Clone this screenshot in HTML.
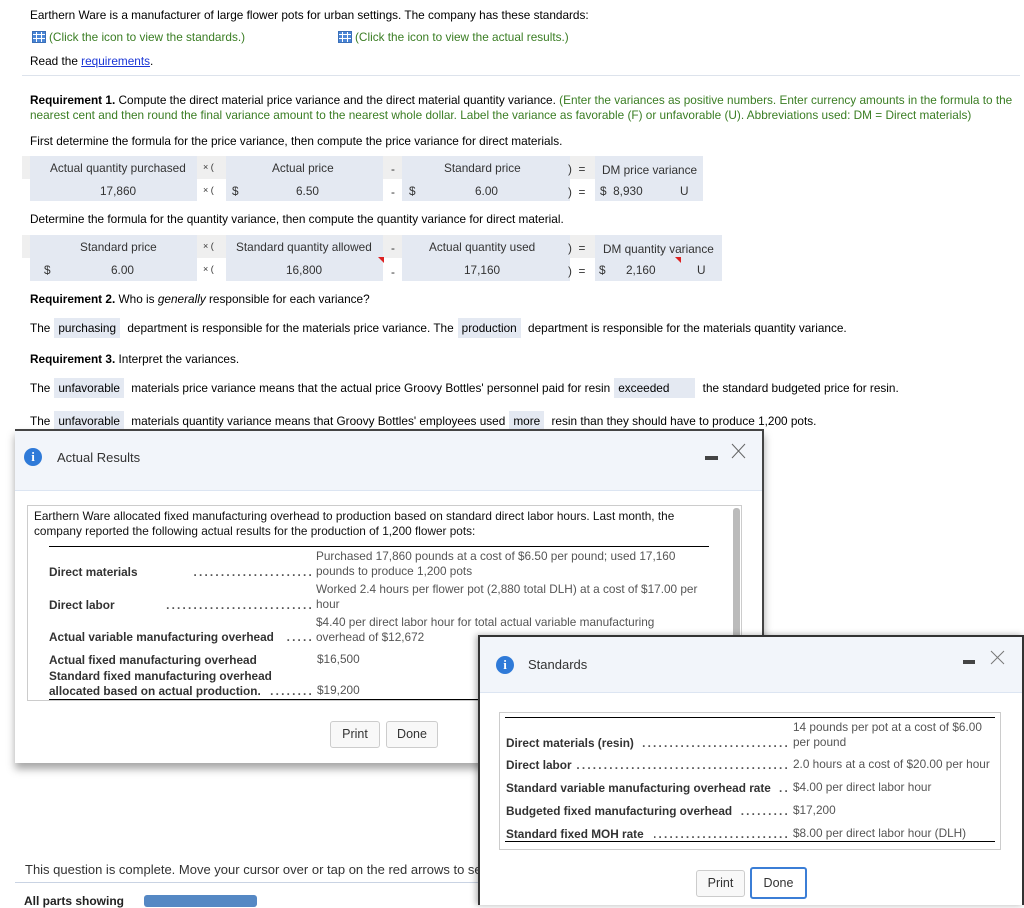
<!DOCTYPE html>
<html><head><meta charset="utf-8"><style>
*{margin:0;padding:0;box-sizing:border-box}
body{width:1024px;height:905px;overflow:hidden;background:#fff;font-family:"Liberation Sans",Arial,sans-serif;font-size:11.8px;color:#000;position:relative}
.a{position:absolute;white-space:nowrap}
.g{color:#3a7d23}
.c{position:absolute;background:#e4e9f2}
.gr{position:absolute;background:#efefef}
.t{position:absolute;white-space:nowrap;font-size:11.8px;color:#333}
.box{background:#e4e9f2;padding:3px 4px;margin:0 4px}
.ic{display:inline-block;width:14px;height:12px;background:#4b86d6;vertical-align:-2px;margin-right:3px;border:1px solid #3a6fb8;background-image:linear-gradient(90deg,transparent 3px,#fff 3px,#fff 4px,transparent 4px,transparent 8px,#fff 8px,#fff 9px,transparent 9px),linear-gradient(0deg,transparent 3px,#fff 3px,#fff 4px,transparent 4px,transparent 7px,#fff 7px,#fff 8px,transparent 8px)}
.info{position:absolute;width:18px;height:18px;border-radius:50%;background:#2f7ad8;color:#fff;font:bold 13px "Liberation Serif",serif;text-align:center;line-height:18px}
.btn{position:absolute;border:1px solid #ccc;border-radius:3px;background:#f8f8f8;font-size:12.5px;color:#333;text-align:center}
.dl{color:#555}
.b{font-weight:bold;color:#333}
.dots{position:absolute;overflow:hidden;white-space:nowrap;text-align:right;direction:rtl;color:#555;letter-spacing:2.2px;font-weight:bold}
.tri{position:absolute;width:0;height:0;border-top:6px solid #d22;border-left:6px solid transparent}
</style></head><body>
<div class="a" style="left:30px;top:8px">Earthern Ware is a manufacturer of large flower pots for urban settings. The company has these standards:</div>
<div class="a g" style="left:32px;top:30px"><span class="ic"></span>(Click the icon to view the standards.)</div>
<div class="a g" style="left:338px;top:30px"><span class="ic"></span>(Click the icon to view the actual results.)</div>
<div class="a" style="left:30px;top:54px">Read the <span style="color:#1a35d6;text-decoration:underline">requirements</span>.</div>
<div class="a" style="left:22px;top:75px;width:998px;height:1px;background:#dde3ec"></div>
<div class="a" style="left:30px;top:93px;line-height:15px"><b>Requirement 1.</b> Compute the direct material price variance and the direct material quantity variance. <span class="g">(Enter the variances as positive numbers. Enter currency amounts in the formula to the</span><br><span class="g">nearest cent and then round the final variance amount to the nearest whole dollar. Label the variance as favorable (F) or unfavorable (U). Abbreviations used: DM = Direct materials)</span></div>
<div class="a" style="left:30px;top:134px">First determine the formula for the price variance, then compute the price variance for direct materials.</div>

<div class="gr" style="left:22px;top:156px;width:681px;height:23px"></div>
<div class="c" style="left:30px;top:156px;width:167px;height:45px"></div>
<div class="c" style="left:226px;top:156px;width:157px;height:45px"></div>
<div class="c" style="left:402px;top:156px;width:168px;height:45px"></div>
<div class="c" style="left:595px;top:156px;width:108px;height:45px"></div>
<div class="t" style="left:50px;top:161px">Actual quantity purchased</div>
<div class="t" style="left:203px;top:162px;font-size:9px">× (</div>
<div class="t" style="left:272px;top:161px">Actual price</div>
<div class="t" style="left:391px;top:162px">-</div>
<div class="t" style="left:444px;top:161px">Standard price</div>
<div class="t" style="left:568px;top:162px">)&nbsp;&nbsp;=</div>
<div class="t" style="left:602px;top:163px">DM price variance</div>
<div class="t" style="left:100px;top:184px">17,860</div>
<div class="t" style="left:203px;top:185px;font-size:9px">× (</div>
<div class="t" style="left:232px;top:184px">$</div>
<div class="t" style="left:296px;top:184px">6.50</div>
<div class="t" style="left:391px;top:185px">-</div>
<div class="t" style="left:409px;top:184px">$</div>
<div class="t" style="left:475px;top:184px">6.00</div>
<div class="t" style="left:568px;top:185px">)&nbsp;&nbsp;=</div>
<div class="t" style="left:600px;top:184px">$&nbsp;&nbsp;8,930</div>
<div class="t" style="left:680px;top:184px">U</div>

<div class="a" style="left:30px;top:212px">Determine the formula for the quantity variance, then compute the quantity variance for direct material.</div>
<div class="gr" style="left:22px;top:235px;width:700px;height:23px"></div>
<div class="c" style="left:30px;top:235px;width:167px;height:46px"></div>
<div class="c" style="left:226px;top:235px;width:157px;height:46px"></div>
<div class="c" style="left:402px;top:235px;width:168px;height:46px"></div>
<div class="c" style="left:595px;top:235px;width:127px;height:46px"></div>
<div class="t" style="left:80px;top:240px">Standard price</div>
<div class="t" style="left:203px;top:241px;font-size:9px">× (</div>
<div class="t" style="left:236px;top:240px">Standard quantity allowed</div>
<div class="t" style="left:391px;top:241px">-</div>
<div class="t" style="left:429px;top:240px">Actual quantity used</div>
<div class="t" style="left:568px;top:241px">)&nbsp;&nbsp;=</div>
<div class="t" style="left:603px;top:242px">DM quantity variance</div>
<div class="t" style="left:44px;top:263px">$</div>
<div class="t" style="left:111px;top:263px">6.00</div>
<div class="t" style="left:203px;top:264px;font-size:9px">× (</div>
<div class="t" style="left:286px;top:263px">16,800</div>
<div class="tri" style="left:378px;top:257px"></div>
<div class="t" style="left:391px;top:265px">-</div>
<div class="t" style="left:464px;top:263px">17,160</div>
<div class="t" style="left:568px;top:264px">)&nbsp;&nbsp;=</div>
<div class="t" style="left:599px;top:263px">$</div>
<div class="t" style="left:626px;top:263px">2,160</div>
<div class="tri" style="left:675px;top:257px"></div>
<div class="t" style="left:697px;top:263px">U</div>

<div class="a" style="left:30px;top:292px"><b>Requirement 2.</b> Who is <i>generally</i> responsible for each variance?</div>
<div class="a" style="left:30px;top:320px;line-height:17px">The<span class="box">purchasing</span>&nbsp;department is responsible for the materials price variance. The<span class="box">production</span>&nbsp;department is responsible for the materials quantity variance.</div>
<div class="a" style="left:30px;top:352px"><b>Requirement 3.</b> Interpret the variances.</div>
<div class="a" style="left:30px;top:380px;line-height:17px">The<span class="box">unfavorable</span>&nbsp;materials price variance means that the actual price Groovy Bottles' personnel paid for resin<span class="box" style="padding-right:26px">exceeded</span>&nbsp;the standard budgeted price for resin.</div>
<div class="a" style="left:30px;top:413px;line-height:17px">The<span class="box">unfavorable</span>&nbsp;materials quantity variance means that Groovy Bottles' employees used<span class="box">more</span>&nbsp;resin than they should have to produce 1,200 pots.</div>

<div class="a" style="left:15px;top:429px;width:749px;height:334px;background:#fff;border-top:2px solid #444;border-right:2px solid #444;box-shadow:0 6px 8px rgba(0,0,0,.35)"></div>
<div class="a" style="left:15px;top:431px;width:747px;height:60px;background:#f2f5fa;border-bottom:1px solid #dce5f2"></div>
<div class="info" style="left:24px;top:448px">i</div>
<div class="a" style="left:57px;top:450px;font-size:13px;color:#333">Actual Results</div>
<div class="a" style="left:705px;top:456px;width:13px;height:4px;background:#444"></div>
<svg class="a" style="left:731px;top:443px" width="15" height="16"><path d="M1 1L14 15M14 1L1 15" stroke="#666" stroke-width="1"/></svg>
<div class="a" style="left:27px;top:505px;width:715px;height:196px;border:1px solid #ccc"></div>
<div class="a" style="left:733px;top:508px;width:7px;height:132px;background:#bbb;border-radius:3px"></div>
<div class="a" style="left:34px;top:509px;line-height:15px;color:#111">Earthern Ware allocated fixed manufacturing overhead to production based on standard direct labor hours. Last month, the<br>company reported the following actual results for the production of 1,200 flower pots:</div>
<div class="a" style="left:49px;top:546px;width:660px;height:1px;background:#000"></div>
<div class="a b" style="left:49px;top:565px">Direct materials</div>
<div class="dots" style="left:192px;top:565px;width:122px">..........................</div>
<div class="a dl" style="left:316px;top:549px;line-height:15px">Purchased 17,860 pounds at a cost of $6.50 per pound; used 17,160<br>pounds to produce 1,200 pots</div>
<div class="a b" style="left:49px;top:598px">Direct labor</div>
<div class="dots" style="left:166px;top:598px;width:148px">................................</div>
<div class="a dl" style="left:316px;top:582px;line-height:15px">Worked 2.4 hours per flower pot (2,880 total DLH) at a cost of $17.00 per<br>hour</div>
<div class="a b" style="left:49px;top:630px">Actual variable manufacturing overhead</div>
<div class="dots" style="left:286px;top:630px;width:28px">..........</div>
<div class="a dl" style="left:316px;top:615px;line-height:15px">$4.40 per direct labor hour for total actual variable manufacturing<br>overhead of $12,672</div>
<div class="a b" style="left:49px;top:653px">Actual fixed manufacturing overhead</div>
<div class="a dl" style="left:317px;top:652px">$16,500</div>
<div class="a b" style="left:49px;top:669px;line-height:15px">Standard fixed manufacturing overhead<br>allocated based on actual production.</div>
<div class="dots" style="left:268px;top:684px;width:46px">..............</div>
<div class="a dl" style="left:317px;top:683px">$19,200</div>
<div class="a" style="left:49px;top:699px;width:440px;height:1px;background:#000"></div>
<div class="btn" style="left:330px;top:721px;width:50px;height:27px;line-height:25px">Print</div>
<div class="btn" style="left:386px;top:721px;width:52px;height:27px;line-height:25px">Done</div>

<div class="a" style="left:25px;top:862px;font-size:13px;color:#333">This question is complete. Move your cursor over or tap on the red arrows to see</div>
<div class="a" style="left:15px;top:882px;width:470px;height:1px;background:#c9d3e3"></div>
<div class="a" style="left:24px;top:894px;font-size:12px;font-weight:bold;color:#222">All parts showing</div>
<div class="a" style="left:144px;top:895px;width:113px;height:12px;background:#5588c4;border-radius:3px"></div>

<div class="a" style="left:478px;top:635px;width:546px;height:270px;background:#fff;border-top:2px solid #333;border-left:2px solid #333;border-right:2px solid #333;box-shadow:-2px 0 6px rgba(0,0,0,.3)"></div>
<div class="a" style="left:480px;top:637px;width:542px;height:56px;background:#f2f5fa;border-bottom:1px solid #dce5f2"></div>
<div class="info" style="left:496px;top:656px">i</div>
<div class="a" style="left:528px;top:657px;font-size:13px;color:#333">Standards</div>
<div class="a" style="left:963px;top:660px;width:12px;height:4px;background:#444"></div>
<svg class="a" style="left:990px;top:650px" width="15" height="15"><path d="M1 1L14 14M14 1L1 14" stroke="#777" stroke-width="1"/></svg>
<div class="a" style="left:499px;top:712px;width:502px;height:138px;border:1px solid #ccc"></div>
<div class="a" style="left:505px;top:717px;width:490px;height:1px;background:#000"></div>
<div class="a dl" style="left:793px;top:720px;line-height:15px">14 pounds per pot at a cost of $6.00<br>per pound</div>
<div class="a b" style="left:506px;top:736px">Direct materials (resin)</div>
<div class="dots" style="left:642px;top:736px;width:148px">........................................</div>
<div class="a b" style="left:506px;top:758px">Direct labor</div>
<div class="dots" style="left:576px;top:758px;width:214px">........................................................</div>
<div class="a b" style="left:506px;top:781px">Standard variable manufacturing overhead rate</div>
<div class="a dl" style="left:793px;top:757px">2.0 hours at a cost of $20.00 per hour</div>
<div class="dots" style="left:778px;top:781px;width:12px">.....</div>
<div class="a dl" style="left:793px;top:780px">$4.00 per direct labor hour</div>
<div class="a b" style="left:506px;top:804px">Budgeted fixed manufacturing overhead</div>
<div class="dots" style="left:740px;top:804px;width:50px">..............</div>
<div class="a dl" style="left:793px;top:803px">$17,200</div>
<div class="a b" style="left:506px;top:827px">Standard fixed MOH rate</div>
<div class="dots" style="left:654px;top:827px;width:136px">.....................................</div>
<div class="a dl" style="left:793px;top:826px">$8.00 per direct labor hour (DLH)</div>
<div class="a" style="left:505px;top:841px;width:490px;height:1px;background:#000"></div>
<div class="btn" style="left:696px;top:870px;width:49px;height:27px;line-height:25px">Print</div>
<div class="btn" style="left:750px;top:867px;width:57px;height:32px;line-height:28px;border:2px solid #3b7ed6;background:#fff">Done</div>
</body></html>
